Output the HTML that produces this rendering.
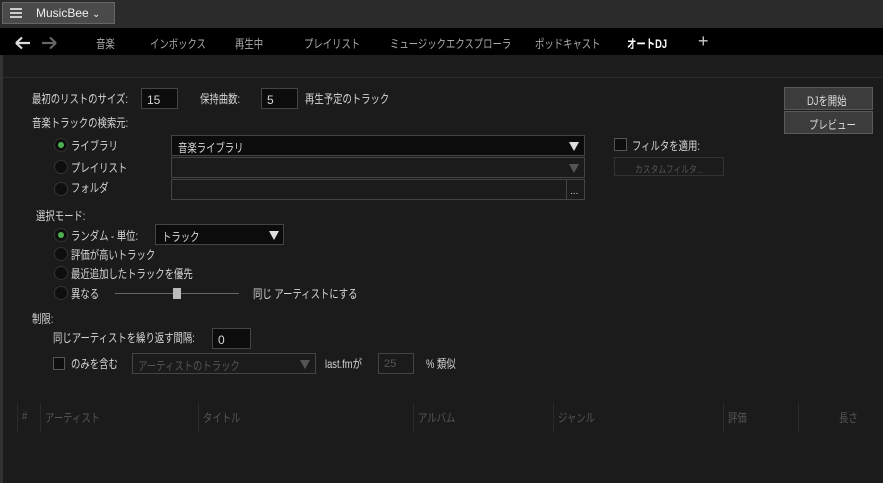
<!DOCTYPE html>
<html><head><meta charset="utf-8"><style>
*{margin:0;padding:0;box-sizing:border-box}
body{width:883px;height:483px;background:#1b1b1b;font-family:"Liberation Sans","Noto Sans CJK JP",sans-serif;font-size:12px;color:#d6d6d6;position:relative;overflow:hidden}
.a{position:absolute;white-space:nowrap}
.t{transform:scaleX(.78);transform-origin:0 0}
.box{position:absolute;background:#0c0c0c;border:1px solid #444}
.rad{position:absolute;width:14px;height:14px;border-radius:50%;background:#0e0e0e;border:1px solid #333}
.rad.on::after{content:"";position:absolute;left:3px;top:3px;width:6px;height:6px;border-radius:50%;background:#4caf50}
.btn{position:absolute;background:#3c3c3c;border:1px solid #5a5a5a;text-align:center;color:#ddd}
.tri{position:absolute;width:0;height:0;border-left:5px solid transparent;border-right:5px solid transparent;border-top:9px solid #ddd}
.hd{position:absolute;top:403px;height:30px;border-left:1px solid #2a2a2a;color:#555}
.hd span{position:absolute;top:6px;left:4px;transform:scaleX(.78);transform-origin:0 0;white-space:nowrap}
</style></head><body>
<div class="a" style="left:0;top:0;width:883px;height:28px;background:#2b2b2b"></div>
<div class="a" style="left:2px;top:2px;width:113px;height:22px;background:#4a4a4a;border:1px solid #666"></div>
<div class="a" style="left:10px;top:8px;width:12px;height:2px;background:#ccc;box-shadow:0 4px 0 #ccc,0 8px 0 #ccc"></div>
<div class="a" style="left:36px;top:6px;color:#eee;font-size:12px">MusicBee <span style="font-size:10px">⌄</span></div>
<div class="a" style="left:0;top:28px;width:883px;height:27px;background:#000"></div>
<svg class="a" style="left:14px;top:36px" width="50" height="14"><path d="M2 7H16M2 7L8 1.5M2 7L8 12.5" stroke="#ddd" stroke-width="2.2" fill="none"/><path d="M42 7H28M42 7L36 1.5M42 7L36 12.5" stroke="#666" stroke-width="2.2" fill="none"/></svg>
<div class="a t" style="left:96px;top:35px;color:#aaa">音楽</div>
<div class="a t" style="left:150px;top:35px;color:#aaa">インボックス</div>
<div class="a t" style="left:235px;top:35px;color:#aaa">再生中</div>
<div class="a t" style="left:304px;top:35px;color:#aaa">プレイリスト</div>
<div class="a t" style="left:390px;top:35px;color:#aaa">ミュージックエクスプローラ</div>
<div class="a t" style="left:535px;top:35px;color:#aaa">ポッドキャスト</div>
<div class="a t" style="left:627px;top:35px;color:#fff;font-weight:bold">オートDJ</div>
<div class="a" style="left:698px;top:31px;color:#ccc;font-size:18px">+</div>
<div class="a" style="left:0;top:55px;width:883px;height:23px;background:#1d1d1d;border-bottom:1px solid #2c2c2c"></div>
<div class="a" style="left:0;top:55px;width:3px;height:428px;background:#333"></div>

<div class="a t" style="left:32px;top:90px">最初のリストのサイズ:</div>
<div class="box" style="left:141px;top:88px;width:37px;height:21px;padding:4px 5px">15</div>
<div class="a t" style="left:200px;top:90px">保持曲数:</div>
<div class="box" style="left:261px;top:88px;width:37px;height:21px;padding:4px 5px">5</div>
<div class="a t" style="left:305px;top:90px">再生予定のトラック</div>
<div class="btn" style="left:784px;top:87px;width:89px;height:23px"><span class="a t" style="left:22px;top:4px">DJを開始</span></div>
<div class="btn" style="left:784px;top:111px;width:89px;height:23px;"><span class="a t" style="left:24px;top:4px">プレビュー</span></div>

<div class="a t" style="left:32px;top:114px">音楽トラックの検索元:</div>
<div class="rad on" style="left:54px;top:138px"></div><div class="a t" style="left:71px;top:137px">ライブラリ</div>
<div class="rad" style="left:54px;top:160px"></div><div class="a t" style="left:71px;top:159px">プレイリスト</div>
<div class="rad" style="left:54px;top:182px"></div><div class="a t" style="left:71px;top:179px">フォルダ</div>
<div class="box" style="left:171px;top:135px;width:414px;height:21px"><span class="a t" style="left:6px;top:3px">音楽ライブラリ</span></div>
<div class="tri" style="left:569px;top:142px"></div>
<div class="a" style="left:171px;top:157px;width:414px;height:21px;background:#1b1b1b;border:1px solid #444"></div>
<div class="tri" style="left:569px;top:164px;border-top-color:#555"></div>
<div class="a" style="left:171px;top:179px;width:414px;height:21px;background:#1b1b1b;border:1px solid #444"></div>
<div class="a" style="left:566px;top:180px;width:18px;height:19px;border-left:1px solid #444;color:#ccc;font-size:10px;padding:6px 0 0 3px">...</div>
<div class="a" style="left:614px;top:138px;width:13px;height:13px;background:#0e0e0e;border:1px solid #555"></div>
<div class="a t" style="left:632px;top:137px">フィルタを適用:</div>
<div class="a" style="left:614px;top:157px;width:110px;height:19px;border:1px solid #333"></div>
<div class="a t" style="left:635px;top:161px;color:#555;font-size:10px">カスタムフィルタ...</div>

<div class="a t" style="left:36px;top:207px">選択モード:</div>
<div class="rad on" style="left:54px;top:228px"></div><div class="a t" style="left:71px;top:227px">ランダム - 単位:</div>
<div class="box" style="left:155px;top:224px;width:129px;height:21px"><span class="a t" style="left:6px;top:3px">トラック</span></div>
<div class="tri" style="left:269px;top:231px"></div>
<div class="rad" style="left:54px;top:247px"></div><div class="a t" style="left:71px;top:246px">評価が高いトラック</div>
<div class="rad" style="left:54px;top:266px"></div><div class="a t" style="left:71px;top:265px">最近追加したトラックを優先</div>
<div class="rad" style="left:54px;top:286px"></div><div class="a t" style="left:71px;top:285px">異なる</div>
<div class="a" style="left:115px;top:293px;width:124px;height:1px;background:#666"></div>
<div class="a" style="left:173px;top:288px;width:8px;height:11px;background:#bbb"></div>
<div class="a t" style="left:253px;top:285px">同じ アーティストにする</div>

<div class="a t" style="left:32px;top:310px">制限:</div>
<div class="a t" style="left:53px;top:329px">同じアーティストを繰り返す間隔:</div>
<div class="box" style="left:212px;top:328px;width:39px;height:21px;padding:4px 5px">0</div>
<div class="a" style="left:53px;top:357px;width:12px;height:13px;background:#0e0e0e;border:1px solid #555"></div>
<div class="a t" style="left:71px;top:355px">のみを含む</div>
<div class="a" style="left:132px;top:353px;width:184px;height:21px;border:1px solid #444"><span class="a t" style="left:5px;top:3px;color:#555">アーティストのトラック</span></div>
<div class="tri" style="left:300px;top:360px;border-top-color:#555"></div>
<div class="a t" style="left:325px;top:355px">last.fmが</div>
<div class="a" style="left:378px;top:353px;width:36px;height:21px;border:1px solid #444;color:#555;padding:4px 5px;font-size:11px">25</div>
<div class="a t" style="left:426px;top:355px">% 類似</div>

<div class="hd" style="left:17px;width:23px"><span>#</span></div>
<div class="hd" style="left:40px;width:158px"><span>アーティスト</span></div>
<div class="hd" style="left:198px;width:215px"><span>タイトル</span></div>
<div class="hd" style="left:413px;width:140px"><span>アルバム</span></div>
<div class="hd" style="left:553px;width:170px"><span>ジャンル</span></div>
<div class="hd" style="left:723px;width:75px"><span>評価</span></div>
<div class="hd" style="left:798px;width:85px"><span style="left:40px">長さ</span></div>
</body></html>
